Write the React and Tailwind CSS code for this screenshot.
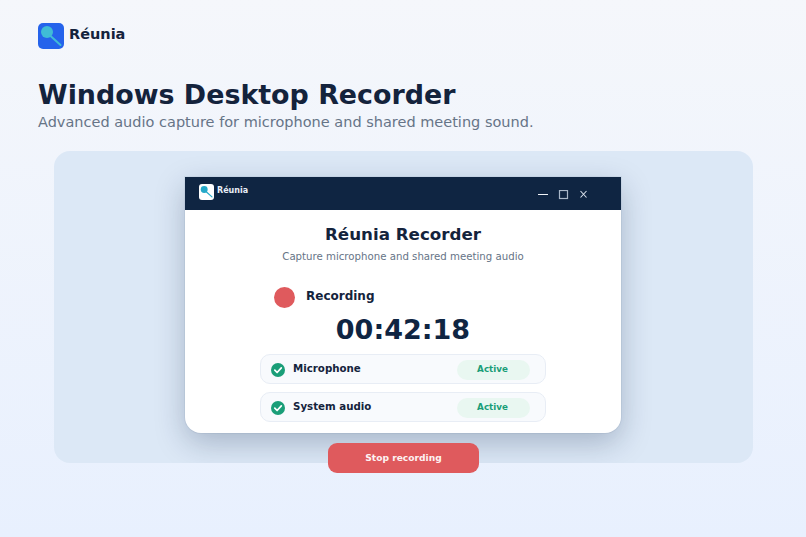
const Mic = ({ head }) => (
  <svg viewBox="0 0 26 26" className="w-full h-full">
    <circle cx="9" cy="9" r="6" fill={head} />
    <path d="M12 12.5 L22.5 22" stroke={head} strokeWidth="2" strokeLinecap="round" fill="none" />
  </svg>
);

const Check = () => (
  <svg viewBox="0 0 14 14" className="w-[14px] h-[14px] shrink-0">
    <circle cx="7" cy="7" r="7" fill="#1a9e78" />
    <path d="M3.8 7.2 L6.1 9.5 L10.3 4.9" stroke="#fff" strokeWidth="1.7" fill="none" strokeLinecap="round" strokeLinejoin="round" />
  </svg>
);

const SourceRow = ({ label }) => (
  <div className="flex items-center justify-between w-[286px] h-[30px] pt-[1px] pl-[10px] pr-[15px] rounded-[10px] border border-[#e8edf5] bg-[#f8fafd]">
    <div className="flex items-center gap-[8px]">
      <Check />
      <span className="text-[10.25px] font-bold text-[#14233c] -mt-[2px]">{label}</span>
    </div>
    <span className="flex items-center justify-center w-[73px] h-[20px] pr-[2px] rounded-full bg-[#e9f7f1] text-[8.75px] font-bold text-[#1a9e78]">
      Active
    </span>
  </div>
);

const WindowControls = () => (
  <svg viewBox="0 0 51 10" className="w-[51px] h-[10px]" fill="none">
    <path d="M0 4.5 H10" stroke="#f0f3f7" strokeWidth="1.1" />
    <rect x="21.5" y="0.5" width="8" height="8" stroke="#a9b7c9" strokeWidth="1.2" />
    <path d="M42.5 1 L48.5 7.5 M48.5 1 L42.5 7.5" stroke="#d8e0ea" strokeWidth="1.1" />
  </svg>
);

export default function App() {
  return (
    <div className="w-[806px] h-[537px] overflow-hidden bg-gradient-to-b from-[#f5f7fb] to-[#e8f0fe] font-['DejaVu_Sans',sans-serif]">
      <header className="flex items-center gap-[5px] pl-[38px] pt-[23px]">
        <div className="w-[26px] h-[26px] rounded-[5px] bg-[#2563eb] overflow-hidden">
          <Mic head="#40bcd6" />
        </div>
        <span className="text-[14.5px] font-bold text-[#14233c] -mt-[2px]">Réunia</span>
      </header>

      <div className="pl-[38px] pt-[28px]">
        <h1 className="text-[26.88px] leading-[36px] font-bold text-[#14233c]">Windows Desktop Recorder</h1>
        <p className="text-[14.5px] leading-[20px] mt-[-1px] text-[#667487]">
          Advanced audio capture for microphone and shared meeting sound.
        </p>
      </div>

      <section className="flex flex-col items-center w-[699px] ml-[54px] mt-[19px]">
        <div className="flex justify-center w-full h-[312px] pt-[26px] pr-[1px] rounded-[16px] bg-[#dce8f6] overflow-hidden">
          <div className="w-[436px] h-[256px] shrink-0 flex flex-col rounded-b-[16px] bg-white overflow-hidden shadow-[0_10px_30px_rgba(15,35,70,0.26),0_0_0_1px_rgba(15,35,70,0.05)]">
            <div className="flex items-start justify-between h-[33px] shrink-0 bg-[#0f2542] pl-[14px] pr-[32px] pt-[7px]">
              <div className="flex items-start gap-[3px]">
                <div className="w-[15px] h-[15.5px] rounded-[3px] bg-white overflow-hidden">
                  <Mic head="#25a9c9" />
                </div>
                <span className="text-[8px] font-bold text-[#e8eef6] leading-[12px] pt-[1px]">Réunia</span>
              </div>
              <div className="pt-[6px]">
                <WindowControls />
              </div>
            </div>

            <div className="flex flex-col items-center flex-1">
              <h2 className="mt-[12px] text-[16.7px] leading-[24px] font-bold text-[#14233c]">Réunia Recorder</h2>
              <p className="mt-[3px] text-[10.2px] leading-[16px] text-[#667487]">
                Capture microphone and shared meeting audio
              </p>
              <div className="flex items-center gap-[11px] self-start ml-[89px] mt-[22px]">
                <span className="w-[21px] h-[21px] rounded-full bg-[#df5a5d]" />
                <span className="text-[12px] font-bold text-[#14233c] -mt-[4px]">Recording</span>
              </div>
              <div className="mt-[5px] text-[27px] leading-[34px] font-bold text-[#0f2542]">00:42:18</div>
              <div className="flex flex-col gap-[8px] mt-[7px]">
                <SourceRow label="Microphone" />
                <SourceRow label="System audio" />
              </div>
            </div>
          </div>
        </div>

        <button className="-mt-[20px] w-[151px] h-[30px] pt-[2px] shrink-0 rounded-[9px] bg-[#df5a5d] text-[9.15px] font-bold text-[#fdf3f3] relative">
          Stop recording
        </button>
      </section>
    </div>
  );
}
